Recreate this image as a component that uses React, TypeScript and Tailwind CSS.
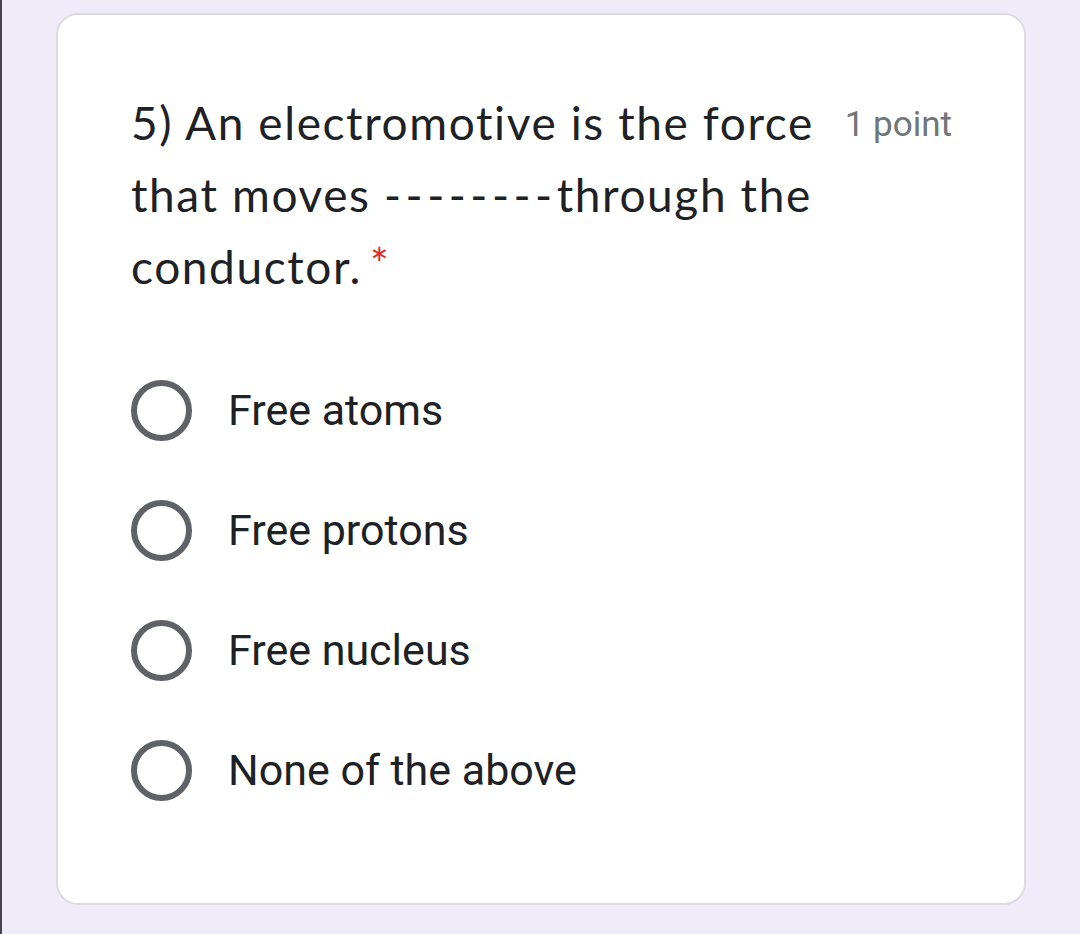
const options = ['Free atoms', 'Free protons', 'Free nucleus', 'None of the above'];

function Radio() {
  return <div className="h-[61px] w-[61px] shrink-0 rounded-full border-[6px] border-[#5f6368]" />;
}

export default function App() {
  return (
    <div className="flex h-[934px] w-[1080px] border-l-2 border-[#45434f] bg-[#efebf8]">
      <div className="ml-[54px] mt-[13px] flex h-[892px] w-[970px] flex-col rounded-[22px] border-2 border-[#dcdbe0] bg-white pl-[73px] pr-[72px] pt-[72px]">
        <div className="flex items-start gap-[18px]">
          <div className="flex-1 text-[46px] leading-[72px] tracking-[1.6px] text-[#202124]" style={{ fontFamily: 'Lato, "Open Sans", sans-serif' }}>
            5) An electromotive is the force that moves{' '}
            <span className="whitespace-nowrap">
              <span className="tracking-[4.5px]">--------</span>through
            </span>{' '}
            the conductor.
            <span className="ml-[8px] align-[4px] text-[44px] leading-none text-[#d93025]">*</span>
          </div>
          <div className="pt-[14px] text-[35px] leading-[48px] text-[#70757a]" style={{ fontFamily: 'Roboto, sans-serif' }}>
            1 point
          </div>
        </div>
        <div className="mt-[47px] flex flex-col">
          {options.map((o) => (
            <div key={o} className="flex h-[120px] items-center gap-[36px]">
              <Radio />
              <span className="text-[43px] text-[#202124]" style={{ fontFamily: 'Roboto, sans-serif' }}>
                {o}
              </span>
            </div>
          ))}
        </div>
      </div>
    </div>
  );
}
